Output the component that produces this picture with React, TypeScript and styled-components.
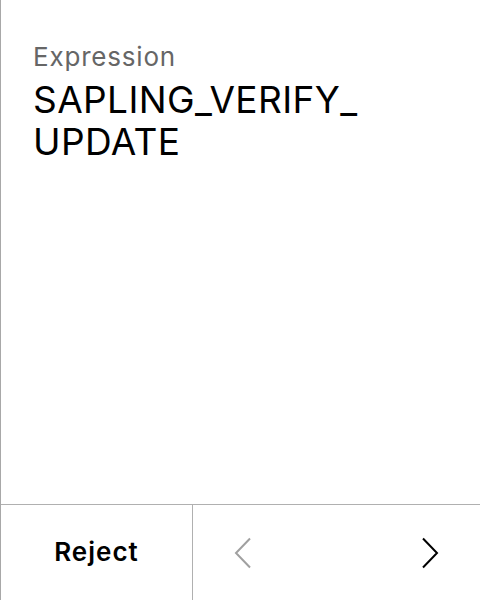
import React from "react";
import styled, { createGlobalStyle } from "styled-components";

const Global = createGlobalStyle`
  html, body { margin: 0; padding: 0; background: #fff; }
  body { font-family: Inter, "Noto Sans", sans-serif; }
`;

const Screen = styled.div`
  width: 480px;
  height: 600px;
  box-sizing: border-box;
  border-left: 1px solid #a8a8a8;
  display: flex;
  flex-direction: column;
  background: #fff;
`;

const Content = styled.div`
  flex: 1;
  padding: 40px 32px 0 32px;
  display: flex;
  flex-direction: column;
`;

const Label = styled.div`
  font-size: 26px;
  line-height: 34px;
  letter-spacing: 0.8px;
  color: #666;
`;

const Value = styled.div`
  margin-top: 5px;
  font-size: 37px;
  line-height: 42px;
  letter-spacing: 0.4px;
  color: #000;
  max-width: 380px;
`;

const Footer = styled.div`
  height: 95px;
  border-top: 1px solid #b0b0b0;
  display: grid;
  grid-template-columns: 192px 1fr;
`;

const RejectButton = styled.button`
  border: none;
  border-right: 1px solid #b0b0b0;
  background: none;
  font-family: Inter, sans-serif;
  font-size: 26px;
  font-weight: 600;
  letter-spacing: 1px;
  color: #000;
  padding: 0 0 2px 0;
  cursor: pointer;
`;

const Nav = styled.div`
  display: flex;
  align-items: center;
  justify-content: space-between;
  padding: 0 41px 0 41px;
`;

const NavButton = styled.button<{ $disabled?: boolean }>`
  border: none;
  background: none;
  padding: 0;
  display: flex;
  color: ${(p) => (p.$disabled ? "#a0a0a0" : "#000")};
`;

const Chevron = ({ dir }: { dir: "left" | "right" }) => (
  <svg width="18" height="32" viewBox="0 0 18 32" fill="none">
    <path
      d={dir === "left" ? "M16 1.5 L2 16 L16 30.5" : "M2 1.5 L16 16 L2 30.5"}
      stroke="currentColor"
      strokeWidth="2"
    />
  </svg>
);

export default function App() {
  return (
    <>
      <Global />
      <Screen>
        <Content>
          <Label>Expression</Label>
          <Value>
            SAPLING_VERIFY_
            <br />
            UPDATE
          </Value>
        </Content>
        <Footer>
          <RejectButton>Reject</RejectButton>
          <Nav>
            <NavButton $disabled>
              <Chevron dir="left" />
            </NavButton>
            <NavButton>
              <Chevron dir="right" />
            </NavButton>
          </Nav>
        </Footer>
      </Screen>
    </>
  );
}
